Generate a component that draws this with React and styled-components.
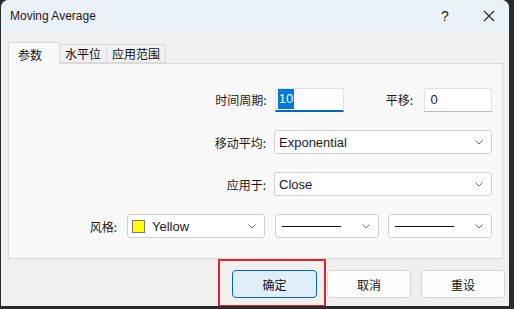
import React from "react";
import styled, { createGlobalStyle } from "styled-components";

const Global = createGlobalStyle`
  html, body {
    margin: 0;
    padding: 0;
    background: #2b2b2b;
  }
  body {
    font-family: "Liberation Sans", "Noto Sans CJK SC", sans-serif;
    font-size: 12px;
    color: #1a1a1a;
  }
`;

const Screen = styled.div`
  width: 514px;
  height: 309px;
  overflow: hidden;
`;

const Window = styled.div`
  width: 508px;
  height: 306px;
  margin-left: 1px;
  background: #f0f0f0;
  border-radius: 8px 8px 0 0;
  display: flex;
  flex-direction: column;
  overflow: hidden;
`;

const TitleBar = styled.div`
  height: 32px;
  display: flex;
  align-items: center;
  background: #eaf1f7;
  padding-left: 9px;
`;

const Title = styled.div`
  flex: 1;
  font-size: 12px;
  color: #1b1b1b;
`;

const CaptionButton = styled.div`
  width: ${(p) => p.w}px;
  height: 32px;
  display: flex;
  align-items: center;
  justify-content: center;
  font-size: 14px;
  color: #222;
`;

const Body = styled.div`
  flex: 1;
  display: flex;
  flex-direction: column;
  padding: 10px 6px 0 7px;
`;

const TabStrip = styled.div`
  display: flex;
  align-items: flex-end;
  height: 21px;
  position: relative;
  z-index: 1;
`;

const Tab = styled.div`
  height: ${(p) => (p.active ? 22 : 19)}px;
  padding: 0 ${(p) => (p.active ? 17 : 5)}px 0 ${(p) => (p.active ? 9 : 5)}px;
  margin-bottom: ${(p) => (p.active ? -1 : 0)}px;
  display: flex;
  align-items: ${(p) => (p.active ? "flex-start" : "center")};
  padding-top: ${(p) => (p.active ? 3 : 0)}px;
  box-sizing: border-box;
  background: ${(p) => (p.active ? "#f9f9f9" : "#f0f0f0")};
  border: 1px solid #dadada;
  border-bottom: ${(p) => (p.active ? "none" : "1px solid #dadada")};
  margin-left: ${(p) => (p.first ? 0 : -1)}px;
  font-family: "Noto Sans CJK SC", sans-serif;
  font-size: 12px;
  color: #111;
`;

const Panel = styled.div`
  height: 196px;
  box-sizing: border-box;
  background: #f9f9f9;
  border: 1px solid #dadada;
  padding: 23px 10px 0 0;
  display: flex;
  flex-direction: column;
  gap: 18px;
`;

const Row = styled.div`
  display: flex;
  align-items: center;
  justify-content: flex-end;
  height: ${(p) => p.h || 24}px;
`;

const Label = styled.div`
  font-family: "Noto Sans CJK SC", sans-serif;
  font-size: 12px;
  color: #1a1a1a;
  margin-right: ${(p) => p.mr || 8}px;
  margin-left: ${(p) => p.ml || 0}px;
`;

const TextBox = styled.div`
  width: ${(p) => p.w}px;
  height: 24px;
  box-sizing: border-box;
  background: #fff;
  border: 1px solid #e0e0e0;
  border-bottom: ${(p) => (p.focused ? "2px solid #0067c0" : "1px solid #b8b8b8")};
  border-radius: 3px 3px 0 0;
  padding-left: 2px;
  display: flex;
  align-items: center;
  font-size: 13px;
`;

const Selected = styled.span`
  background: #0078d7;
  color: #fff;
  padding: 1px 1px;
  line-height: 18px;
`;

const Select = styled.div`
  width: ${(p) => p.w}px;
  height: 24px;
  box-sizing: border-box;
  background: #fff;
  border: 1px solid #d0d0d0;
  border-radius: 3px;
  padding: 0 8px 0 4px;
  margin-left: ${(p) => p.ml || 0}px;
  display: flex;
  align-items: center;
  gap: 7px;
  font-size: 13px;
`;

const SelectText = styled.div`
  flex: 1;
  color: #1a1a1a;
`;

const Swatch = styled.div`
  width: 11px;
  height: 11px;
  background: #ffff00;
  border: 1px solid #7a7a7a;
`;

const LineSample = styled.div`
  flex: 1;
  height: 1px;
  background: #111;
  margin: 0 14px 0 2px;
`;

const Footer = styled.div`
  display: flex;
  justify-content: flex-end;
  gap: 10px;
  padding: 11px 4px 0 0;
  margin-right: -6px;
`;

const ButtonWrap = styled.div`
  position: relative;
`;

const Button = styled.div`
  width: ${(p) => p.w || 84}px;
  height: 28px;
  box-sizing: border-box;
  border-radius: 4px;
  border: 1px solid ${(p) => (p.primary ? "#0067c0" : "#d3d3d3")};
  background: ${(p) => (p.primary ? "#e0eef9" : "#fdfdfd")};
  display: flex;
  align-items: center;
  justify-content: center;
  font-family: "Noto Sans CJK SC", sans-serif;
  font-size: 12px;
  color: #111;
`;

const Highlight = styled.div`
  position: absolute;
  left: -14px;
  top: -11px;
  right: -9px;
  bottom: -9px;
  border: 2px solid #e3232c;
  pointer-events: none;
`;

const Chevron = () => (
  <svg width="8" height="5" viewBox="0 0 8 5">
    <polyline points="0.5,0.5 4,4 7.5,0.5" fill="none" stroke="#707070" strokeWidth="1" />
  </svg>
);

const Close = () => (
  <svg width="12" height="12" viewBox="0 0 12 12">
    <path d="M1 1 L11 11 M11 1 L1 11" stroke="#222" strokeWidth="1.1" />
  </svg>
);

const App = () => {
  return (
    <Screen>
      <Global />
      <Window>
        <TitleBar>
          <Title>Moving Average</Title>
          <CaptionButton w={48}>?</CaptionButton>
          <CaptionButton w={40}>
            <Close />
          </CaptionButton>
        </TitleBar>
        <Body>
          <TabStrip>
            <Tab active first>参数</Tab>
            <Tab>水平位</Tab>
            <Tab>应用范围</Tab>
          </TabStrip>
          <Panel>
            <Row h={25}>
              <Label>时间周期:</Label>
              <TextBox w={69} focused>
                <Selected>10</Selected>
              </TextBox>
              <Label ml={42} mr={11}>平移:</Label>
              <TextBox w={68}>&nbsp;0</TextBox>
            </Row>
            <Row>
              <Label>移动平均:</Label>
              <Select w={218}>
                <SelectText>Exponential</SelectText>
                <Chevron />
              </Select>
            </Row>
            <Row>
              <Label>应用于:</Label>
              <Select w={218}>
                <SelectText>Close</SelectText>
                <Chevron />
              </Select>
            </Row>
            <Row>
              <Label mr={10}>风格:</Label>
              <Select w={138}>
                <Swatch />
                <SelectText>Yellow</SelectText>
                <Chevron />
              </Select>
              <Select w={104} ml={10}>
                <LineSample />
                <Chevron />
              </Select>
              <Select w={104} ml={9}>
                <LineSample />
                <Chevron />
              </Select>
            </Row>
          </Panel>
          <Footer>
            <ButtonWrap>
              <Button primary w={85}>确定</Button>
              <Highlight />
            </ButtonWrap>
            <Button>取消</Button>
            <Button>重设</Button>
          </Footer>
        </Body>
      </Window>
    </Screen>
  );
};

export default App;
